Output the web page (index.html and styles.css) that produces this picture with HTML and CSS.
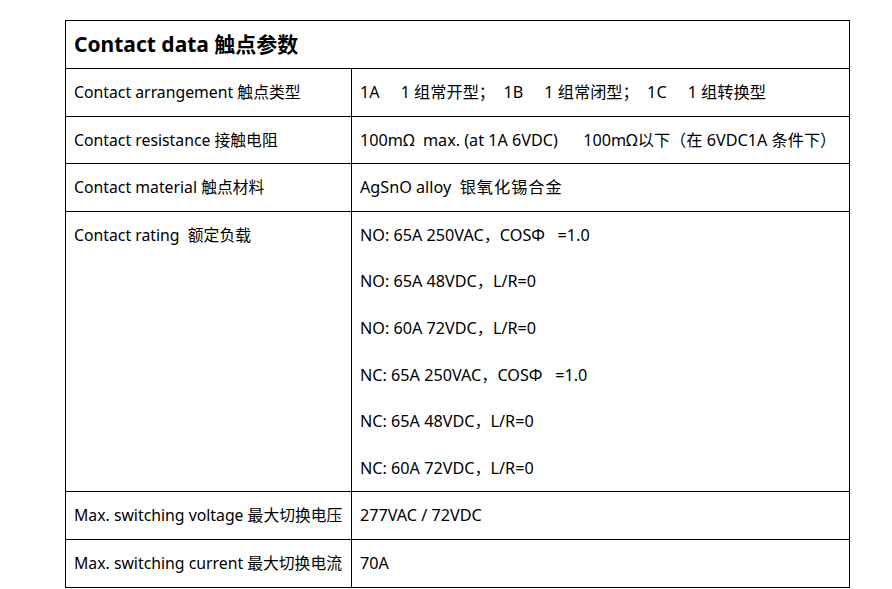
FILE: index.html
```html
<!DOCTYPE html>
<html lang="zh">
<head>
<meta charset="utf-8">
<title>Contact data</title>
<link rel="stylesheet" href="styles.css">
</head>
<body>
<div class="page">
  <table class="spec">
    <colgroup>
      <col class="col-label">
      <col class="col-value">
    </colgroup>
    <tr class="head-row">
      <th colspan="2">Contact data 触点参数</th>
    </tr>
    <tr>
      <td class="label">Contact arrangement 触点类型</td>
      <td class="value pre">1A     1 组常开型；  1B     1 组常闭型；  1C     1 组转换型</td>
    </tr>
    <tr>
      <td class="label">Contact resistance 接触电阻</td>
      <td class="value pre">100mΩ  max. (at 1A 6VDC)      100mΩ以下（在 6VDC1A 条件下）</td>
    </tr>
    <tr>
      <td class="label">Contact material 触点材料</td>
      <td class="value pre">AgSnO alloy  <span class="wide">银氧化锡合金</span></td>
    </tr>
    <tr>
      <td class="label pre">Contact rating  额定负载</td>
      <td class="value">
        <div class="line pre">NO: 65A 250VAC，COSΦ   =1.0</div>
        <div class="line pre">NO: 65A 48VDC，L/R=0</div>
        <div class="line pre">NO: 60A 72VDC，L/R=0</div>
        <div class="line pre">NC: 65A 250VAC，COSΦ   =1.0</div>
        <div class="line pre">NC: 65A 48VDC，L/R=0</div>
        <div class="line pre">NC: 60A 72VDC，L/R=0</div>
      </td>
    </tr>
    <tr>
      <td class="label">Max. switching voltage 最大切换电压</td>
      <td class="value">277VAC / 72VDC</td>
    </tr>
    <tr>
      <td class="label">Max. switching current 最大切换电流</td>
      <td class="value">70A</td>
    </tr>
  </table>
</div>
</body>
</html>
```

FILE: styles.css
```css
html, body {
  margin: 0;
  padding: 0;
  background: #ffffff;
}

.page {
  padding: 20px 0 0 65px;
  font-family: "Noto Sans", "Noto Sans CJK SC", sans-serif;
  color: #000000;
}

.spec {
  border-collapse: collapse;
  width: 784px;
  table-layout: fixed;
}

.col-label {
  width: 286px;
}

.col-value {
  width: 498px;
}

.spec th,
.spec td {
  border: 1px solid #000000;
  padding: 0 0 0 8px;
  text-align: left;
  vertical-align: top;
  line-height: 46.6px;
  font-size: 15.8px;
  font-weight: normal;
  white-space: nowrap;
  overflow: hidden;
}

.spec th {
  font-size: 21px;
  font-weight: bold;
  line-height: 47px;
}

.spec td.value {
  font-size: 16.2px;
}

.spec .pre {
  white-space: pre;
}

.wide {
  letter-spacing: 1px;
}

.line {
  height: 46.6px;
}
```
